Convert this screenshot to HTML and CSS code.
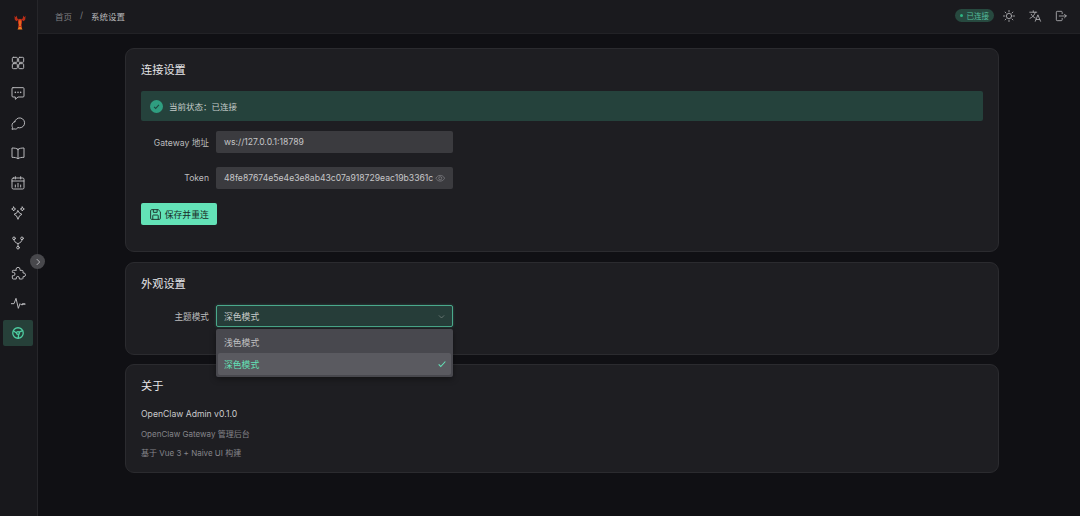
FILE: index.html
```html
<!DOCTYPE html>
<html lang="zh">
<head>
<meta charset="utf-8">
<title>系统设置</title>
<link rel="stylesheet" href="styles.css">
</head>
<body>
<div class="layout">
  <aside class="sidebar">
    <div class="logo">
      <svg viewBox="0 0 24 30" width="12" height="15"><path fill="#c9331a" d="M8.500 9c-.8 3.500-.8 7 .5 10.500L8 25h8l-1-5.500c1.300-3.500 1.300-7 .5-10.500L12 7.500z"/><path fill="#b92e18" d="M9 9.500 4.500 12.500 1.500 9 1 1.500 3.500 4.500l2-3.500L6.500 7 9 8zM15 9.500l4.500 3L22.500 9l.5-7.500-2.500 3-2-3.500-1 6L15 8z"/><path fill="#ee7a22" d="M9.500 24h5L17 29H7zM10.500 11h3v11h-3z"/></svg>
    </div>
    <nav class="nav">
      <a class="nav-item"><svg class="ic" viewBox="0 0 24 24"><rect x="3.500" y="3.500" width="7.500" height="7.500" rx="1.500"/><rect x="13" y="3.500" width="7.500" height="7.500" rx="1.500"/><rect x="3.500" y="13" width="7.500" height="7.500" rx="1.500"/><rect x="13" y="13" width="7.500" height="7.500" rx="1.500"/></svg></a>
      <a class="nav-item"><svg class="ic" viewBox="0 0 24 24"><path d="M4.500 4h15A1.500 1.500 0 0 1 21 5.500v11a1.500 1.500 0 0 1-1.500 1.500H12l-4 3.500V18H4.500A1.500 1.500 0 0 1 3 16.500v-11A1.500 1.500 0 0 1 4.500 4z"/><path d="M8 11h.01M12 11h.01M16 11h.01" stroke-width="2.400" stroke-linecap="round"/></svg></a>
      <a class="nav-item"><svg class="ic" viewBox="0 0 24 24"><path d="M7 10.500a7.500 7.500 0 1 1 5 8.500"/><path d="M7.500 9.500C4.800 10.500 3 13 3 15.500c0 1.200.3 2.300.8 3.200L3 21.500l3-.7c2.800 1 5-.2 6-1.800"/></svg></a>
      <a class="nav-item"><svg class="ic" viewBox="0 0 24 24"><path d="M12 6.500C10 5 7 4.500 3 4.500v14c4 0 7 .5 9 2 2-1.500 5-2 9-2v-14c-4 0-7 .5-9 2zM12 6.500v14"/></svg></a>
      <a class="nav-item"><svg class="ic" viewBox="0 0 24 24"><rect x="3" y="4.500" width="18" height="16.500" rx="2"/><path d="M3 9h18M8 2.500V6M16 2.500V6M8 18v-3M12 18v-5.500M16 18v-3"/></svg></a>
      <a class="nav-item"><svg class="ic" viewBox="0 0 24 24"><path d="M12 8.500l2.300 3.700 3.700 1.800-3.700 2.200L12 21.500l-2.300-5.300L6 14l3.700-1.800z"/><path d="M5.500 3l1 2 2 1-2 1-1 2-1-2-2-1 2-1zM18.500 3l1 2 2 1-2 1-1 2-1-2-2-1 2-1z"/></svg></a>
      <a class="nav-item"><svg class="ic" viewBox="0 0 24 24"><circle cx="6" cy="5" r="2"/><circle cx="18" cy="5" r="2"/><circle cx="12" cy="19" r="2"/><path d="M6 7c0 3 2 4 6 6 4-2 6-3 6-6M12 13v4"/></svg></a>
      <a class="nav-item"><svg class="ic" viewBox="0 0 24 24"><path d="M9 6.500a3 3 0 0 1 6 0V8h3a1.500 1.500 0 0 1 1.500 1.500V12H21a2.800 2.800 0 0 1 0 5.500h-1.500V20a1.500 1.500 0 0 1-1.500 1H14v-1.500a2.300 2.300 0 0 0-4.600 0V21H5a1.500 1.500 0 0 1-1.500-1.500V16H5a2.500 2.500 0 0 0 0-5H3.500V9.500A1.500 1.500 0 0 1 5 8h4z"/></svg></a>
      <a class="nav-item"><svg class="ic" viewBox="0 0 24 24"><path d="M2 13h4l3-8 3.500 15 2.500-7 1.500 1.500H19"/><path d="M19 13.500h3" stroke-width="2.600"/></svg></a>
      <a class="nav-item active"><svg class="ic ic-active" viewBox="0 0 24 24"><circle cx="12" cy="12" r="9"/><circle cx="12" cy="12" r="2.500"/><path d="M14 10.500 20 8M9.500 12 4.500 8.500M13 14.300l-.5 6.500"/></svg></a>
    </nav>
    <button class="collapse" aria-label="展开"><svg viewBox="0 0 24 24" width="10" height="10"><path d="M9 5l7 7-7 7" fill="none" stroke="#c8c8cc" stroke-width="2"/></svg></button>
  </aside>
  <div class="main">
    <header class="topbar">
      <div class="crumbs"><span class="crumb">首页</span><span class="crumb sep">/</span><span class="crumb current">系统设置</span></div>
      <div class="actions">
        <span class="tag"><i class="dot"></i>已连接</span>
        <svg class="ic act" viewBox="0 0 24 24"><circle cx="12" cy="12" r="4.500"/><path d="M12 2.500v2.500M12 19v2.500M2.500 12H5M19 12h2.500M5.300 5.300 7 7M17 17l1.700 1.700M5.300 18.700 7 17M17 7l1.700-1.700"/></svg>
        <svg class="ic act" viewBox="0 0 24 24"><path d="M3 5.500h12M9 3v2.500M12.500 5.500C11.500 10 8 14 3.500 16M5.500 9c1.500 3 4 5 7 6.500M12.500 21l4.500-11 4.500 11M14 18h6"/></svg>
        <svg class="ic act" viewBox="0 0 24 24"><path d="M14 8V5.500A1.500 1.500 0 0 0 12.500 4h-7A1.500 1.500 0 0 0 4 5.500v13A1.500 1.500 0 0 0 5.500 20h7a1.500 1.500 0 0 0 1.500-1.500V16M9 12h12M18 9l3 3-3 3"/></svg>
      </div>
    </header>
    <main class="content">
      <section class="card card-conn">
        <h2 class="card-title">连接设置</h2>
        <div class="alert">
          <svg class="alert-icon" viewBox="0 0 24 24" width="13" height="13"><circle cx="12" cy="12" r="12" fill="#2f9e80"/><path d="M7.500 12.500l3 3 6-6.500" fill="none" stroke="#1e4a40" stroke-width="2"/></svg>
          <span>当前状态：已连接</span>
        </div>
        <div class="form-row">
          <label class="form-label">Gateway 地址</label>
          <div class="input">ws://127.0.0.1:18789</div>
        </div>
        <div class="form-row">
          <label class="form-label">Token</label>
          <div class="input"><span class="input-text">48fe87674e5e4e3e8ab43c07a918729eac19b3361c</span>
            <svg class="eye" viewBox="0 0 24 24"><path d="M2 12c2.500-4.500 6-6.500 10-6.500S19.500 7.500 22 12c-2.500 4.500-6 6.500-10 6.500S4.500 16.500 2 12z"/><circle cx="12" cy="12" r="3.500"/></svg>
          </div>
        </div>
        <button class="btn"><svg class="btn-ic" viewBox="0 0 24 24"><path d="M5 3h12l4 4v12a2 2 0 0 1-2 2H5a2 2 0 0 1-2-2V5a2 2 0 0 1 2-2z"/><path d="M8 3v5h7V3M7 21v-7a1 1 0 0 1 1-1h8a1 1 0 0 1 1 1v7"/></svg>保存并重连</button>
      </section>
      <section class="card card-look">
        <h2 class="card-title">外观设置</h2>
        <div class="form-row form-row-last">
          <label class="form-label">主题模式</label>
          <div class="select-wrap">
            <div class="select"><span>深色模式</span><svg class="chev" viewBox="0 0 24 24"><path d="M5 9l7 7 7-7"/></svg></div>
            <div class="menu">
              <div class="opt">浅色模式</div>
              <div class="opt selected"><span>深色模式</span><svg class="check" viewBox="0 0 24 24"><path d="M4 13l5 5L20 6"/></svg></div>
            </div>
          </div>
        </div>
      </section>
      <section class="card card-about">
        <h2 class="card-title">关于</h2>
        <p class="about-name">OpenClaw Admin v0.1.0</p>
        <p class="about-line">OpenClaw Gateway 管理后台</p>
        <p class="about-line">基于 Vue 3 + Naive UI 构建</p>
      </section>
    </main>
  </div>
</div>
</body>
</html>
```
FILE: styles.css
```css
* { box-sizing: border-box; }
html, body { margin: 0; height: 100%; }
body {
  background: #101014;
  color: #d6d6d8;
  font-family: "Inter", "Noto Sans CJK SC", sans-serif;
  font-size: 9px;
  overflow: hidden;
}
.layout { display: flex; height: 516px; }
.sidebar {
  position: relative;
  width: 38px;
  flex: none;
  background: #18181c;
  border-right: 1px solid #26262a;
  display: flex;
  flex-direction: column;
  align-items: center;
}
.logo { height: 44px; margin-bottom: 6px; display: flex; align-items: center; justify-content: center; width: 100%; padding-left: 3px; }
.nav { display: flex; flex-direction: column; gap: 4px; align-items: center; padding-right: 1px; }
.nav-item { width: 30px; height: 26px; display: flex; align-items: center; justify-content: center; border-radius: 2px; color: #bdbdc0; }
.nav-item.active { background: #264039; color: #4fcfa3; }
.ic { width: 16px; height: 16px; fill: none; stroke: currentColor; stroke-width: 1.450; stroke-linejoin: round; stroke-linecap: round; }
.ic-active { width: 14px; height: 14px; stroke-width: 2.200; }
.collapse {
  position: absolute;
  left: 30px;
  top: 254px;
  width: 15px;
  height: 15px;
  padding: 0;
  border: 0;
  border-radius: 50%;
  background: #48484c;
  display: flex;
  align-items: center;
  justify-content: center;
  z-index: 2;
}
.main { flex: 1; min-width: 0; display: flex; flex-direction: column; }
.topbar {
  height: 34px;
  flex: none;
  background: #1a1a1e;
  border-bottom: 1px solid #222226;
  display: flex;
  align-items: center;
  justify-content: space-between;
  padding: 0 12px 2px 17px;
}
.crumbs { display: flex; gap: 8px; font-size: 8.500px; }
.crumb { color: #7f7f82; }
.crumb.current { color: #b8b8ba; }
.actions { display: flex; align-items: center; gap: 12px; color: #b8b8bb; }
.act { width: 14px; height: 14px; stroke-width: 1.400; }
.tag {
  height: 13.500px;
  padding: 0 5px 0 4.500px;
  margin-right: -4px;
  display: inline-flex;
  align-items: center;
  gap: 3.500px;
  border-radius: 7px;
  background: #27493f;
  color: #55bf9c;
  font-size: 7.500px;
}
.dot { width: 3.500px; height: 3.500px; border-radius: 50%; background: #2fb583; }
.content { flex: 1; padding: 14px 81px 0 87px; display: flex; flex-direction: column; gap: 10px; }
.card {
  background: #1e1e22;
  border: 1px solid #2b2b2f;
  border-radius: 9px;
  padding: 15px 15px 0;
}
.card-conn { height: 204px; }
.card-look { height: 93px; }
.card-about { height: 109px; margin-top: -1px; }
.card-title { margin: 0 0 14px; font-size: 11.200px; line-height: 13px; font-weight: 400; color: #e6e6e8; }
.alert {
  height: 30px;
  display: flex;
  align-items: center;
  gap: 6px;
  padding-left: 9px;
  margin-bottom: 10px;
  background: #25423c;
  border-radius: 2px;
  font-size: 8.500px;
  color: #c6ccca;
}
.form-row { display: flex; align-items: center; margin-bottom: 14px; }
.form-label { width: 68px; margin-right: 7px; text-align: right; color: #bcbcbe; font-size: 8.650px; }
.input {
  width: 237px;
  height: 22px;
  padding: 0 8px;
  display: flex;
  align-items: center;
  justify-content: space-between;
  background: #3b3b3f;
  border-radius: 2px;
  color: #c6c6c8;
  font-size: 8.650px;
}
.input-text { white-space: nowrap; overflow: hidden; }
.eye { width: 10.500px; height: 10.500px; flex: none; fill: none; stroke: #85858a; stroke-width: 1.600; }
.btn {
  height: 22px;
  width: 76px;
  padding: 0;
  border: 0;
  border-radius: 2px;
  background: #63e2b7;
  color: #1a2b26;
  font: inherit;
  font-size: 8.800px;
  display: flex;
  align-items: center;
  justify-content: center;
  gap: 2.500px;
}
.btn-ic { width: 13px; height: 13px; fill: none; stroke: #1a2b26; stroke-width: 1.700; }
.form-row-last { margin-bottom: 0; }
.select-wrap { position: relative; }
.select {
  width: 237px;
  height: 22px;
  padding: 0 6px 0 7px;
  display: flex;
  align-items: center;
  justify-content: space-between;
  background: #263d39;
  border: 1px solid #4aa98b;
  border-radius: 2px;
  box-shadow: 0 0 3px rgba(99, 226, 183, .25);
  font-size: 8.800px;
  color: #c8ccca;
}
.chev { width: 9px; height: 9px; fill: none; stroke: #7f8a87; stroke-width: 1.800; }
.menu {
  position: absolute;
  left: 0;
  top: 24px;
  width: 237px;
  height: 47.500px;
  padding: 2px;
  background: #48484e;
  border-radius: 2px;
  box-shadow: 0 2px 6px rgba(0, 0, 0, .4);
  z-index: 3;
  font-size: 8.800px;
  color: #c0c0c2;
}
.opt { height: 22px; padding: 0 4px 0 6px; display: flex; align-items: center; justify-content: space-between; }
.opt.selected { background: #5a5a60; color: #63e2b7; border-radius: 2px; }
.check { width: 10px; height: 10px; fill: none; stroke: #63e2b7; stroke-width: 2.600; }
.about-name { margin: 0 0 10px; font-size: 8.650px; line-height: 10px; color: #cacacc; }
.about-line { margin: 0 0 9px; font-size: 8px; line-height: 10px; color: #85858a; }
.card-about .card-title { margin-bottom: 16px; }
```
